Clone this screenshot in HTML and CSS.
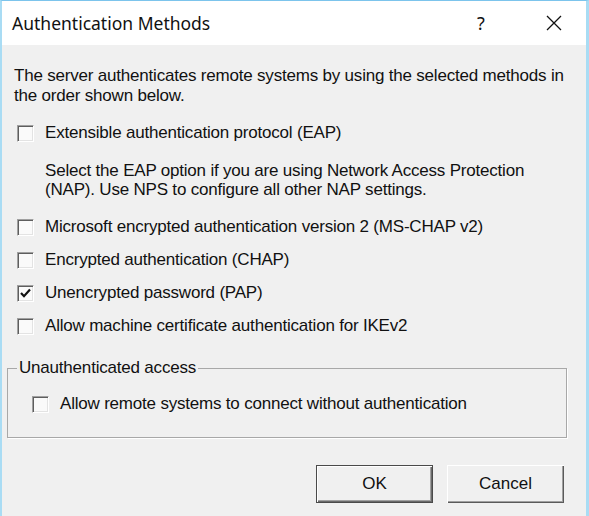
FILE: index.html
```html
<!DOCTYPE html>
<html lang="en">
<head>
    <meta charset="UTF-8">
    <title>Authentication Methods</title>
    <link rel="stylesheet" href="styles.css">
</head>
<body>
    <div class="window">
        <div class="titlebar">
            <div class="title">Authentication Methods</div>
            <div class="help">?</div>
            <div class="close">
                <svg width="16" height="16" viewBox="0 0 16 16">
                    <path d="M1 1 L15 15 M15 1 L1 15" stroke="#111" stroke-width="1.3" fill="none"/>
                </svg>
            </div>
        </div>
        <div class="content">
            <p class="intro">The server authenticates remote systems by using the selected methods in the order shown below.</p>

            <div class="option first"><span class="box"></span><span>Extensible authentication protocol (EAP)</span></div>
            <p class="note">Select the EAP option if you are using Network Access Protection (NAP). Use NPS to configure all other NAP settings.</p>
            <div class="option"><span class="box"></span><span>Microsoft encrypted authentication version 2 (MS-CHAP v2)</span></div>
            <div class="option"><span class="box"></span><span>Encrypted authentication (CHAP)</span></div>
            <div class="option">
                <span class="box">
                    <svg width="13" height="13" viewBox="0 0 13 13"><path d="M2 6 L5 9.2 L11 2.6" stroke="#111" stroke-width="2.2" fill="none"/></svg>
                </span>
                <span>Unencrypted password (PAP)</span>
            </div>
            <div class="option"><span class="box"></span><span>Allow machine certificate authentication for IKEv2</span></div>

            <fieldset class="group">
                <legend>Unauthenticated access</legend>
                <div class="option"><span class="box"></span><span>Allow remote systems to connect without authentication</span></div>
            </fieldset>

            <div class="buttons">
                <button class="btn default">OK</button>
                <button class="btn">Cancel</button>
            </div>
        </div>
    </div>
</body>
</html>
```

FILE: styles.css
```css
html, body {
    margin: 0;
    padding: 0;
}
body {
    font-family: "Liberation Sans", Arial, sans-serif;
    font-size: 17px;
    letter-spacing: -0.2px;
    color: #111;
    background: #f0f0f0;
}
.window {
    width: 589px;
    height: 516px;
    box-sizing: border-box;
    border-top: 1px solid #7cc4ec;
    border-left: 2px solid #a9dcf4;
    border-right: 3px solid #a9dcf4;
    display: flex;
    flex-direction: column;
    background: #f0f0f0;
}
.titlebar {
    height: 44px;
    background: #fff;
    display: flex;
    align-items: center;
    padding-left: 10px;
    flex-shrink: 0;
}
.title {
    font-family: "Noto Sans", "Open Sans", sans-serif;
    font-size: 17.5px;
    letter-spacing: 0;
    flex: 1;
    color: #111;
}
.help {
    font-family: "Noto Sans", sans-serif;
    font-size: 18px;
    width: 14px;
    margin-right: 55px;
}
.close {
    width: 16px;
    height: 16px;
    margin-right: 24px;
    display: flex;
}
.content {
    padding: 21px 18px 0 12px;
    display: flex;
    flex-direction: column;
}
.intro {
    margin: 0;
    line-height: 20px;
}
.option {
    display: flex;
    align-items: center;
    height: 20px;
    margin-top: 13px;
    padding-left: 3px;
}
.option.first {
    margin-top: 17px;
}
.box {
    width: 15px;
    height: 15px;
    border: 1px solid;
    border-color: #a0a0a0 #fff #fff #a0a0a0;
    box-shadow: inset 1px 1px #5e5e5e, inset -1px -1px #e3e3e3;
    background: #fafafa;
    margin-right: 11px;
    display: flex;
    align-items: center;
    justify-content: center;
    flex-shrink: 0;
}
.note {
    margin: 18px 0 5px 31px;
    line-height: 19px;
    max-width: 500px;
}
.group {
    margin: 22px 1px 0 -7px;
    padding: 0 0 23px 6px;
    border: 1px solid #a8a8a8;
    box-shadow: 1px 1px #fff;
}
.group legend {
    padding: 0 2px;
    margin-left: 3px;
    line-height: 20px;
}
.group .option {
    margin-top: 16px;
    padding-left: 18px;
}
.buttons {
    display: flex;
    justify-content: flex-end;
    gap: 14px;
    margin-top: 27px;
    padding-right: 4px;
}
.btn {
    width: 117px;
    height: 38px;
    font-family: "Liberation Sans", Arial, sans-serif;
    font-size: 17px;
    color: #111;
    background: #f0f0f0;
    border: none;
    border-radius: 0;
    box-shadow: inset 1px 1px #fff, inset -1px -1px #5a5a5a, inset -2px -2px #a0a0a0;
}
.btn.default {
    border: 1px solid #4a4a4a;
    box-shadow: inset 1px 1px #fff, inset -1px -1px #6a6a6a, inset -2px -2px #a0a0a0;
}
```
